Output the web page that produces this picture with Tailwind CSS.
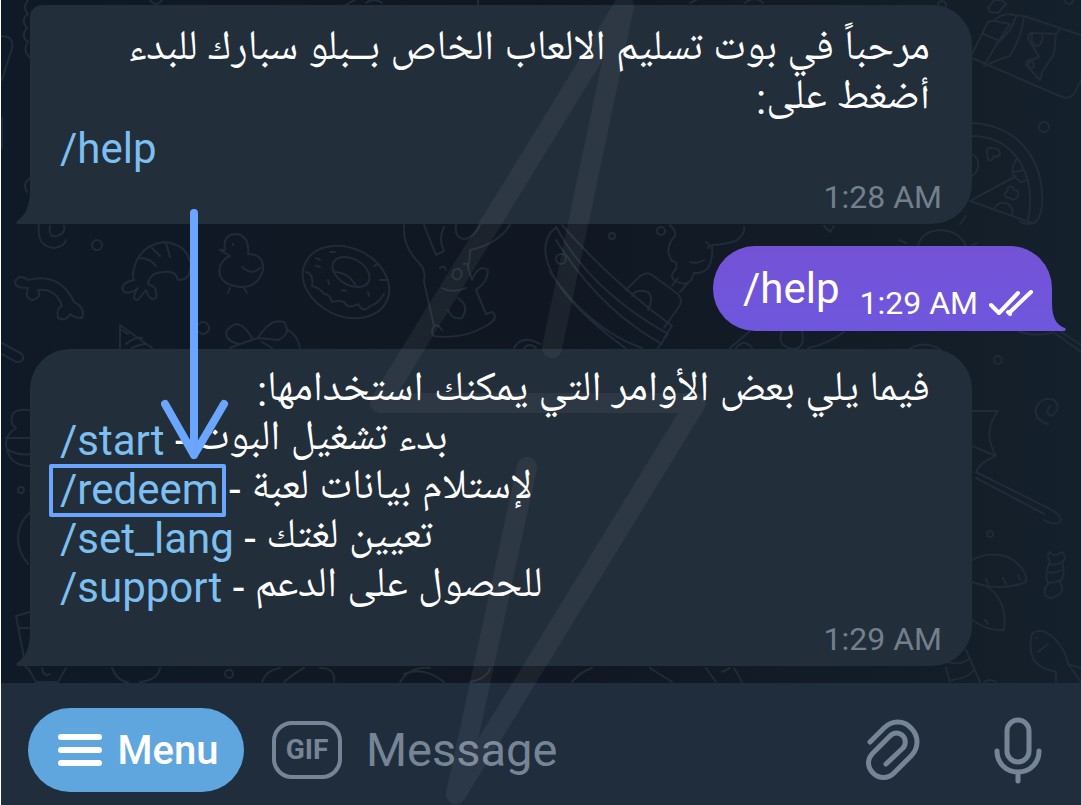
<!DOCTYPE html>
<html lang="ar">
<head>
  <meta charset="UTF-8" />
  <meta name="viewport" content="width=device-width, initial-scale=1.0" />
  <title>Blue Spark Bot</title>
  <script src="https://cdn.jsdelivr.net/npm/@tailwindcss/browser@4"></script>
</head>
<body class="bg-[#101822] min-h-screen font-[Roboto,'Noto_Naskh_Arabic_UI','Noto_Naskh_Arabic','Noto_Sans_Arabic','DejaVu_Sans',sans-serif]">
  <div class="relative min-h-screen flex flex-col overflow-hidden border-l border-white text-[42px] leading-[49px] text-white">

    <!-- wallpaper -->
    <div class="absolute inset-0 bg-linear-to-r from-[#0f1a26] via-[#101722] to-[#14202b]"></div>
    <svg class="absolute top-0 left-0 text-[#202b37]" width="1081" height="805" viewBox="1 0 1081 805" fill="none" stroke="currentColor" stroke-width="2" stroke-linecap="round" stroke-linejoin="round" aria-hidden="true">
      <!-- left edge -->
      <path d="M1 36 Q14 36 12 48 L2 80 M28 0 Q22 8 28 14 Q20 20 27 28 Q20 36 28 42 Q22 50 30 58 M30 178 q-8 6 -3 14 M2 118 v30" />
      <path d="M150 0 q6 8 12 0 M344 6 l14 -8 M366 3 q8 -6 16 0 M478 0 v6 M690 3 l10 -5 M745 3 q10 -8 18 0" />
      <!-- spiral and circles -->
      <path d="M39 225 Q36 246 54 248 Q64 247 66 240 M50 226 Q48 238 57 236 Q66 233 64 226" />
      <circle cx="97" cy="245" r="5" /><circle cx="203" cy="328" r="6" /><circle cx="21" cy="490" r="3" /><circle cx="229" cy="674" r="4" />
      <!-- shrimp -->
      <path d="M190 262 Q186 244 164 242 Q140 245 134 268 Q132 276 134 280 Q118 284 124 292 Q132 294 138 288 Q130 300 138 300 L146 290 Q150 302 156 298 Q158 286 148 284 Q150 272 164 272 Q176 270 178 280 Q190 280 190 268 M166 243 l4 14 M140 258 q10 0 16 8 M152 248 l8 8" />
      <!-- chick -->
      <path d="M225 250 Q222 234 237 234 Q250 237 248 254 Q264 254 263 270 Q258 288 240 287 Q216 284 220 266 Q224 258 230 256 L220 250 Z M242 267 Q252 276 260 268 M230 288 l-2 5 M244 288 l3 5 M233 244 v1" />
      <!-- donut -->
      <ellipse cx="346" cy="282" rx="45" ry="34" transform="rotate(25 346 282)" />
      <ellipse cx="351" cy="272" rx="20" ry="13" transform="rotate(30 351 272)" />
      <path d="M306 272 q8 2 6 14 q8 2 12 8 q6 0 8 8 q6 -2 12 0 q4 8 14 2 q6 10 12 2 q8 -2 14 -12 M334 272 q14 0 22 14 M316 258 l4 2 M330 252 h5 M316 266 l4 1 M374 266 l4 -2 M380 280 h6 M328 280 l1 4 M342 290 l4 1 M368 292 l1 4" />
      <!-- rabbit -->
      <path d="M404 225 Q402 246 420 264 Q426 270 424 282 L434 326 Q430 332 434 336 Q462 340 486 326 Q500 318 492 312 L486 314 L476 290 Q488 282 488 270 Q478 264 472 280 L468 268 Q470 258 470 250 Q498 244 510 225 M424 225 l12 30 l8 -4 q-6 -12 0 -24 M456 225 q-2 14 10 14 q10 -4 14 -14 M440 268 q4 -4 6 2 M464 264 q4 -2 4 4 M452 276 q6 8 10 -2 q-2 -8 -8 -4 Z M442 288 q10 6 24 0 M458 298 q12 8 4 20 q-10 2 -14 -8 M434 326 q4 -2 8 4" />
      <!-- bone -->
      <path d="M28 288 Q12 288 16 280 Q20 274 28 280 Q60 272 74 302 Q86 308 82 318 Q74 318 70 314 Q66 322 58 318 Q56 308 62 306 Q56 288 38 290 Q42 298 32 300 Q24 298 28 288 Z" />
      <!-- hat, bow, stick -->
      <path d="M120 348 V325 L152 348 M122 330 l6 4 M126 344 q10 -8 16 -6 M132 348 q8 -4 14 -4 M252 338 Q238 314 226 332 Q226 342 240 344 L258 338 Q270 318 284 322 Q292 334 278 340 L258 338 M240 344 l-10 4 M262 342 l10 6 M288 330 q10 6 12 18 M2 343 L22 354 Q26 362 16 362 L2 354 M514 348 q8 -14 26 -4 M524 348 q6 -6 12 0" />
      <!-- cupcake, left side -->
      <path d="M30 410 Q12 408 12 418 Q10 424 16 428 Q6 434 6 444 Q8 466 30 466 M6 438 h24 M8 450 q12 6 22 4 M30 512 Q18 524 18 538 Q18 552 28 564 M30 612 l-14 4 l10 52 M18 628 h12" />
      <path d="M28 668 l8 14 h22 l8 -14 M42 668 q2 10 8 6 M112 668 q6 14 16 14 M140 682 q18 -2 20 -14 M262 682 q4 -12 18 -14 M284 682 q12 -10 20 -14 M320 668 q16 0 14 14 M400 682 q10 -16 30 -14 M404 674 q20 -8 40 8 M470 682 q18 -4 20 -14 M572 682 q8 -10 20 -14 M650 668 l22 14 M706 668 l10 14 M722 672 l8 -4 M734 668 l8 14" />
      <!-- bowl and pot -->
      <path d="M556 227 Q540 240 548 264 Q560 300 625 348 M556 227 Q590 290 668 334 L658 348 M562 225 Q610 280 672 326 L664 338 M550 272 Q590 330 642 348 M556 240 Q600 310 662 344 M626 290 L640 276 Q648 270 656 278 L678 294 Q684 302 678 308 L664 328 M632 296 q4 -8 16 -4 q6 6 0 18 M672 286 l6 -8 M680 292 l7 -8" />
      <circle cx="561" cy="259" r="5" /><circle cx="612" cy="236" r="3" /><circle cx="661" cy="231" r="4" />
      <path d="M670 225 q8 8 4 12 q-10 12 -2 24 q6 0 4 8 q-8 8 0 12 q14 8 18 -8 q20 2 18 -28 q10 0 24 -4 q10 -8 8 -14 M706 242 q6 4 2 6 M690 262 q8 2 14 -2 M824 226 l6 6 l4 -6" />
      <!-- lamp above the sent message -->
      <path d="M918 246 Q922 230 942 230 Q960 232 966 246 M899 240 l7 3 M972 246 l5 -3 M960 224 l6 -8 M1020 222 q10 4 16 0 M730 348 l20 -17 M736 348 q8 -10 16 0 M782 331 q-6 14 10 18 q14 0 10 -18 M808 348 q20 -4 36 -16 M905 352 q18 -14 36 -2 M1018 331 q14 6 34 2" />
      <!-- milk carton -->
      <path d="M972 54 L987 24 Q989 20 994 21 L1010 24 M983 34 L1000 41 M994 21 Q1002 12 1014 15 L1024 16 L1081 35 M1016 16 Q1012 32 998 42 L984 66 M1024 16 Q1022 36 1010 56 L998 60 L984 66 M1010 24 L998 42 M972 58 L1062 97 Q1072 100 1076 90 L1081 80 M1056 34 L1060 29 M1056 34 L1054 54 L1042 72 L1040 80 L1026 65 Q1026 59 1032 60 L1039 57 L1028 38 Q1028 32 1034 33 L1056 34 M1032 34 Q1030 46 1038 46 Q1044 42 1042 34" />
      <path d="M988 8 L994 0 H1002 L1006 4 L998 13 L990 12 Z" />
      <circle cx="1031" cy="65" r="3" /><circle cx="942" cy="5" r="4" /><circle cx="1069" cy="0" r="4" /><circle cx="1044" cy="127" r="5" />
      <!-- pizza -->
      <path d="M972 123 Q1000 124 1020 142 Q1044 166 1042 204 Q1040 222 1032 223 L970 201 L1016 176 M972 136 Q998 136 1014 154 Q1036 180 1028 221 M972 154 Q979 158 978 166 Q978 172 972 176 M987 152 Q986 147 992 148 Q1000 148 1000 154 Q998 158 994 156 Q992 162 988 160 Q988 156 987 152 M1016 160 Q1008 174 1018 180 Q1022 184 1026 180 M1014 172 L1024 170 M1008 188 Q1012 184 1014 190 Q1020 190 1018 196 Q1014 202 1010 198 Q1004 198 1005 193 Q1008 192 1008 188 M994 208 Q1000 200 1008 204 Q1014 208 1012 215" />
      <!-- right side -->
      <circle cx="998" cy="360" r="4" /><circle cx="990" cy="534" r="3" />
      <path d="M1052 331 L1081 352 M1060 331 L1081 345 M1048 424 Q1034 420 1036 408 Q1042 396 1054 400 Q1062 408 1052 416 Q1044 414 1050 406 M972 411 L998 411 Q982 432 996 456 L972 446 M996 456 Q980 462 976 472 L1052 510 Q1064 518 1060 522 Q1054 526 1044 520 M976 478 L1044 514" />
      <path d="M972 560 Q990 550 1010 558 Q1028 570 1026 582 Q1000 592 972 582 M988 584 l-2 -5 M1006 584 l-3 -6 M1020 580 l-2 -5 M986 586 Q1008 600 1004 630 Q990 632 972 620 M988 624 l-3 -4" />
      <path d="M1050 552 q2 6 12 0 q6 6 0 10 q4 14 -2 20 q6 10 -4 14 q-4 4 -10 0 q-4 -6 2 -12 q-4 -12 2 -22 q-4 -8 0 -10 M1050 564 q6 2 12 -2 M1049 572 q6 2 12 -2 M1048 582 q6 2 12 -2" />
      <path d="M1032 634 Q1040 626 1054 638 Q1066 650 1068 664 L1081 668 M1032 634 Q1026 660 1044 668 L1056 672 L1056 682 M1068 664 L1081 682 M1038 652 l10 -8 M1036 638 h1 M946 668 l4 14 M966 650 l14 32 M948 662 q14 4 22 -4 M952 680 q16 -2 22 -10 M984 682 q6 -4 12 0" />
    </svg>

    <main class="relative flex-1 flex flex-col pt-[5px] pb-4 pl-[29px] pr-[29px]">
      <article class="relative mr-20 pt-[21px] pb-2 px-[30px] bg-[#222e3a] rounded-tl-xl rounded-r-[40px]">
        <svg class="absolute bottom-0 -left-[14px] text-[#222e3a]" width="15" height="36" viewBox="0 0 15 36" fill="currentColor" aria-hidden="true"><path d="M15 0H14C14 18 10 27 1 33Q-1 36 3 36H15Z" /></svg>
        <p dir="rtl" class="pr-3">مرحباً في بوت تسليم الالعاب الخاص بــبلو سبارك للبدء<br />أضغط على:</p>
        <p><a href="#" class="text-[#7dbff0]">/help</a></p>
        <p class="mt-[5px] text-right text-[32px] leading-[38px] text-[#727f8c]"><time>1:28 AM</time></p>
      </article>

      <article class="relative self-end mt-[22px] h-[85px] pl-[30px] pr-[18px] flex items-center gap-5 bg-linear-to-b from-[#7452d6] to-[#6e57dd] rounded-l-[42px] rounded-tr-[42px]">
        <svg class="absolute bottom-0 -right-[14px] text-[#6e57dd]" width="15" height="28" viewBox="0 0 15 28" fill="currentColor" aria-hidden="true"><path d="M0 0H1C1 14 5 22 14 25Q16 28 12 28H0Z" /></svg>
        <p>/help</p>
        <p class="mt-7 flex items-center gap-[10px] text-[32px] leading-[38px]">
          <time>1:29 AM</time>
          <svg width="46" height="26" viewBox="0 0 46 26" fill="none" stroke="currentColor" stroke-width="4" stroke-linecap="round" stroke-linejoin="round" role="img" aria-label="Read"><path d="M3 15L11 23L30 3M21 23L43 2M20 22L22 24" /></svg>
        </p>
      </article>

      <article class="relative mr-20 mt-[18px] pt-[18px] pb-2 px-[30px] bg-[#222e3a] rounded-tl-[40px] rounded-r-[40px]">
        <svg class="absolute bottom-0 -left-[14px] text-[#222e3a]" width="15" height="36" viewBox="0 0 15 36" fill="currentColor" aria-hidden="true"><path d="M15 0H14C14 18 10 27 1 33Q-1 36 3 36H15Z" /></svg>
        <p dir="rtl" class="pr-3">فيما يلي بعض الأوامر التي يمكنك استخدامها:</p>
        <ul>
          <li><a href="#" class="text-[#7dbff0]">/start</a> - بدء تشغيل البوت</li>
          <li><a href="#" class="relative text-[#7dbff0]">/redeem<span class="absolute -left-[11px] -right-[7px] -top-px -bottom-[3px] border-4 border-[#6aa6ff] rounded-xs"></span></a> - لإستلام بيانات لعبة</li>
          <li><a href="#" class="text-[#7dbff0]">/set_lang</a> - تعيين لغتك</li>
          <li><a href="#" class="text-[#7dbff0]">/support</a> - للحصول على الدعم</li>
        </ul>
        <p class="mt-2 text-right text-[32px] leading-[38px] text-[#727f8c]"><time>1:29 AM</time></p>
      </article>
    </main>

    <!-- input bar -->
    <form class="relative flex items-center pl-[27px] pr-[38px] pt-[25px] pb-[13px] bg-[#202d3d] text-[#768596]">
      <button type="button" class="h-[84px] w-[216px] shrink-0 flex items-center justify-center gap-4 pl-1 rounded-full bg-[#5fa6de] text-white text-[40px] font-medium">
        <svg width="44" height="34" viewBox="0 0 44 34" stroke="currentColor" stroke-width="6" stroke-linecap="round" aria-hidden="true"><path d="M3 4H41M3 17H41M3 30H41" /></svg>
        Menu
      </button>
      <button type="button" aria-label="GIF" class="ml-7 w-[70px] h-[58px] shrink-0 flex items-center justify-center rounded-[20px] border-4 border-current text-[28px] leading-[28px] font-bold">GIF</button>
      <input type="text" aria-label="Message" placeholder="Message" class="ml-6 flex-1 min-w-0 text-[47px] leading-[54px] outline-none placeholder:text-[#768596]" />
      <button type="button" aria-label="Attach" class="shrink-0">
        <svg width="54" height="62" viewBox="0 0 54 62" fill="none" stroke="currentColor" stroke-width="5" stroke-linecap="round" stroke-linejoin="round"><path d="M4 23L18 9C26 1 38 1 45 9C53 17 53 29 45 37L28 54C22 60 13 60 7 54C1 48 1 40 7 34L24 17C28 13 33 13 37 17C40 20 40 26 37 29L20 45" /></svg>
      </button>
      <button type="button" aria-label="Voice message" class="ml-[73px] shrink-0">
        <svg width="50" height="68" viewBox="0 0 50 68" fill="none" stroke="currentColor" stroke-width="5" stroke-linecap="round"><rect x="14" y="4" width="22" height="42" rx="11" /><path d="M4 35C4 47 13 56 25 56S46 47 46 35M25 57V65" /></svg>
      </button>
    </form>

    <!-- bolt watermark -->
    <svg class="absolute top-0 left-0 pointer-events-none text-white/5" width="1081" height="805" viewBox="1 0 1081 805" fill="none" stroke="currentColor" stroke-width="20" stroke-linecap="round" stroke-linejoin="round" aria-hidden="true"><path d="M552 348L624 6L380 403H696L456 794L527 467" /></svg>

    <!-- arrow to the redeem command -->
    <svg class="absolute top-[208px] left-[160px] pointer-events-none text-[#6aa6ff]" width="68" height="254" viewBox="0 0 68 254" fill="none" stroke="currentColor" stroke-width="8" stroke-linecap="round" stroke-linejoin="round" aria-hidden="true"><path d="M33 5V247M4 196L33 247L63 196" /></svg>
  </div>
</body>
</html>
